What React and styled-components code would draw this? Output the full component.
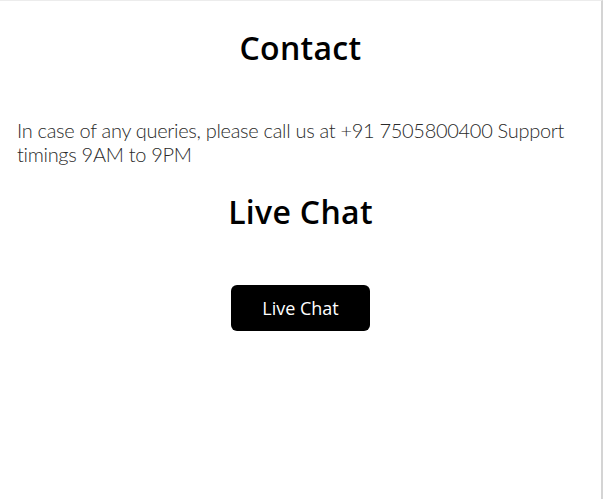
import React from "react"
import styled, { createGlobalStyle } from "styled-components"

const GlobalStyle = createGlobalStyle`
  html, body {
    margin: 0;
    padding: 0;
    background: #fff;
  }
`

const Page = styled.div`
  width: 603px;
  min-height: 499px;
  box-sizing: border-box;
  border-right: 2px solid #d4d4d4;
  border-top: 1px solid #ececec;
  padding: 0 17px;
`

const Heading = styled.h2`
  margin: 0;
  padding-top: ${(props) => props.top}px;
  text-align: center;
  font-family: "Open Sans", sans-serif;
  font-weight: 600;
  font-size: 32px;
  line-height: 40px;
  letter-spacing: 0.3px;
  color: #000;
`

const Text = styled.p`
  margin: 0;
  padding-top: 50px;
  font-family: Lato, sans-serif;
  font-weight: 300;
  font-size: 20px;
  line-height: 24px;
  letter-spacing: -0.3px;
  color: #2a2a2a;
`

const ButtonRow = styled.div`
  display: flex;
  justify-content: center;
  padding-top: 53px;
`

const ChatButton = styled.button`
  width: 139px;
  height: 46px;
  border: none;
  border-radius: 6px;
  background: #000;
  color: #fff;
  font-family: "Open Sans", sans-serif;
  font-size: 18px;
  cursor: pointer;
`

function App() {
  return (
    <>
      <GlobalStyle />
      <Page>
        <Heading top={27}>Contact</Heading>
        <Text>
          In case of any queries, please call us at +91 7505800400 Support
          timings 9AM to 9PM
        </Text>
        <Heading top={26}>Live Chat</Heading>
        <ButtonRow>
          <ChatButton>Live Chat</ChatButton>
        </ButtonRow>
      </Page>
    </>
  )
}

export default App
